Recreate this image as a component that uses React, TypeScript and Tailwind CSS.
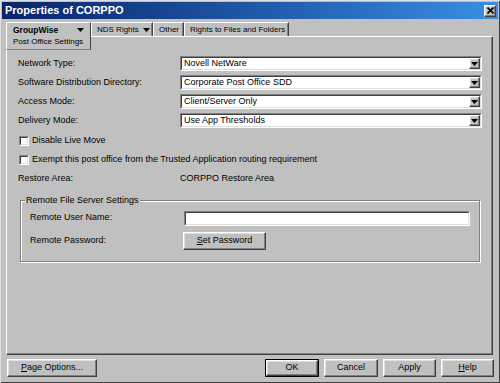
import React from 'react';

const raised =
  'border border-t-white border-l-white border-r-[#404040] border-b-[#404040] shadow-[inset_-1px_-1px_0_#808080,inset_1px_1px_0_#dfdfdf]';

const Arrow: React.FC = () => (
  <svg width="7" height="4" viewBox="0 0 7 4">
    <path d="M0 0h7L3.5 4z" fill="#000" />
  </svg>
);

const Sunken: React.FC<{ className?: string; children?: React.ReactNode }> = ({ className = '', children }) => (
  <div className={`border border-t-[#808080] border-l-[#808080] border-r-white border-b-white ${className}`}>
    <div className="flex h-full w-full items-center border border-t-[#404040] border-l-[#404040] border-r-[#dfdfdf] border-b-[#dfdfdf] bg-white">
      {children}
    </div>
  </div>
);

const Select: React.FC<{ value: string }> = ({ value }) => (
  <Sunken className="h-[15px] w-[302px]">
    <span className="flex-1 truncate pl-[2px] leading-none">{value}</span>
    <span className={`flex h-[11px] w-[11px] items-center justify-center bg-[#c0c0c0] ${raised}`}>
      <Arrow />
    </span>
  </Sunken>
);

const Check: React.FC<{ label: string }> = ({ label }) => (
  <div className="flex h-[14px] items-center gap-[3px] pl-[1px]">
    <Sunken className="h-[10px] w-[10px]" />
    <span>{label}</span>
  </div>
);

const Button: React.FC<{ w: string; def?: boolean; children: React.ReactNode }> = ({ w, def, children }) => (
  <div className={`${w} h-[18px] ${def ? 'border border-black' : ''}`}>
    <div className={`flex h-full w-full items-center justify-center bg-[#c0c0c0] ${raised}`}>{children}</div>
  </div>
);

const Tab: React.FC<{ w: string; children: React.ReactNode }> = ({ w, children }) => (
  <div
    className={`${w} flex h-[14px] items-center gap-[4px] whitespace-nowrap border-t border-l border-r border-t-white border-l-white border-r-[#404040] pl-[5px] shadow-[inset_-1px_0_0_#808080]`}
  >
    {children}
  </div>
);

export default function App() {
  const rows: [string, string][] = [
    ['Network Type:', 'Novell NetWare'],
    ['Software Distribution Directory:', 'Corporate Post Office SDD'],
    ['Access Mode:', 'Client/Server Only'],
    ['Delivery Mode:', 'Use App Thresholds'],
  ];

  return (
    <div
      className="flex h-[383px] w-[500px] flex-col bg-[#c0c0c0] p-[2px] text-[9px] text-black shadow-[inset_1px_1px_0_#dfdfdf,inset_-1px_-1px_0_#404040]"
      style={{ fontFamily: '"Liberation Sans", Arial, sans-serif' }}
    >
      <div className="flex h-[17px] items-center justify-between bg-gradient-to-r from-[#0a246a] to-[#3a8ee6] pl-[3px] pr-[2px]">
        <span className="text-[11px] font-bold text-white">Properties of CORPPO</span>
        <div className={`flex h-[12px] w-[12px] items-center justify-center bg-[#c0c0c0] ${raised}`}>
          <svg width="7" height="7" viewBox="0 0 7 7">
            <path d="M0.5 0.5L6.5 6.5M6.5 0.5L0.5 6.5" stroke="#000" strokeWidth="1.6" />
          </svg>
        </div>
      </div>

      <div className="mt-[3px] ml-[4px] flex h-[14px] items-start text-[8px]">
        <div className="relative z-10 flex h-[28px] w-[85px] flex-col whitespace-nowrap border border-t-white border-l-white border-r-[#404040] border-b-[#808080] bg-[#c0c0c0] pl-[6px] pr-[6px]">
          <div className="flex h-[14px] items-center justify-between">
            <span className="text-[8.5px] font-bold">GroupWise</span>
            <Arrow />
          </div>
          <span className="leading-[10px]">Post Office Settings</span>
        </div>
        <Tab w="w-[62px]">
          <span>NDS Rights</span>
          <Arrow />
        </Tab>
        <Tab w="w-[31px]">
          <span>Other</span>
        </Tab>
        <Tab w="w-[105px]">
          <span>Rights to Files and Folders</span>
        </Tab>
      </div>

      <div className="ml-[4px] mr-[5px] flex h-[319px] flex-col border border-t-white border-l-white border-r-[#404040] border-b-[#404040] pt-[19px] pl-[11px] shadow-[inset_-1px_-1px_0_#808080]">
        <div className="flex flex-col gap-[4px]">
          {rows.map(([label, value]) => (
            <div key={label} className="flex h-[15px] items-center">
              <span className="w-[162px]">{label}</span>
              <Select value={value} />
            </div>
          ))}
        </div>
        <div className="mt-[6px] flex flex-col gap-[5px]">
          <Check label="Disable Live Move" />
          <Check label="Exempt this post office from the Trusted Application routing requirement" />
        </div>
        <div className="mt-[5px] flex h-[14px] items-center">
          <span className="w-[162px]">Restore Area:</span>
          <span>CORPPO Restore Area</span>
        </div>

        <div className="mt-[14px] ml-[2px] flex w-[460px] flex-col border border-[#808080] pl-[9px] pb-[11px] shadow-[inset_1px_1px_0_#fff,1px_1px_0_#fff]">
          <span className="-mt-[8px] -ml-[5px] h-[14px] self-start bg-[#c0c0c0] px-[1px] leading-[14px]">
            Remote File Server Settings
          </span>
          <div className="mt-[4px] flex h-[14px] items-center">
            <span className="w-[154px]">Remote User Name:</span>
            <Sunken className="h-[15px] w-[286px]" />
          </div>
          <div className="mt-[6px] flex h-[19px] items-center">
            <span className="w-[153px]">Remote Password:</span>
            <Button w="w-[83px]">
              <span>
                <span className="underline">S</span>et Password
              </span>
            </Button>
          </div>
        </div>
      </div>

      <div className="mt-[4px] flex items-center justify-between pl-[5px] pr-[4px]">
        <Button w="w-[90px]">
          <span>
            <span className="underline">P</span>age Options...
          </span>
        </Button>
        <div className="flex gap-[5px]">
          <Button w="w-[54px]" def>
            OK
          </Button>
          <Button w="w-[54px]">Cancel</Button>
          <Button w="w-[53px]">Apply</Button>
          <Button w="w-[53px]">
            <span>
              <span className="underline">H</span>elp
            </span>
          </Button>
        </div>
      </div>
    </div>
  );
}
